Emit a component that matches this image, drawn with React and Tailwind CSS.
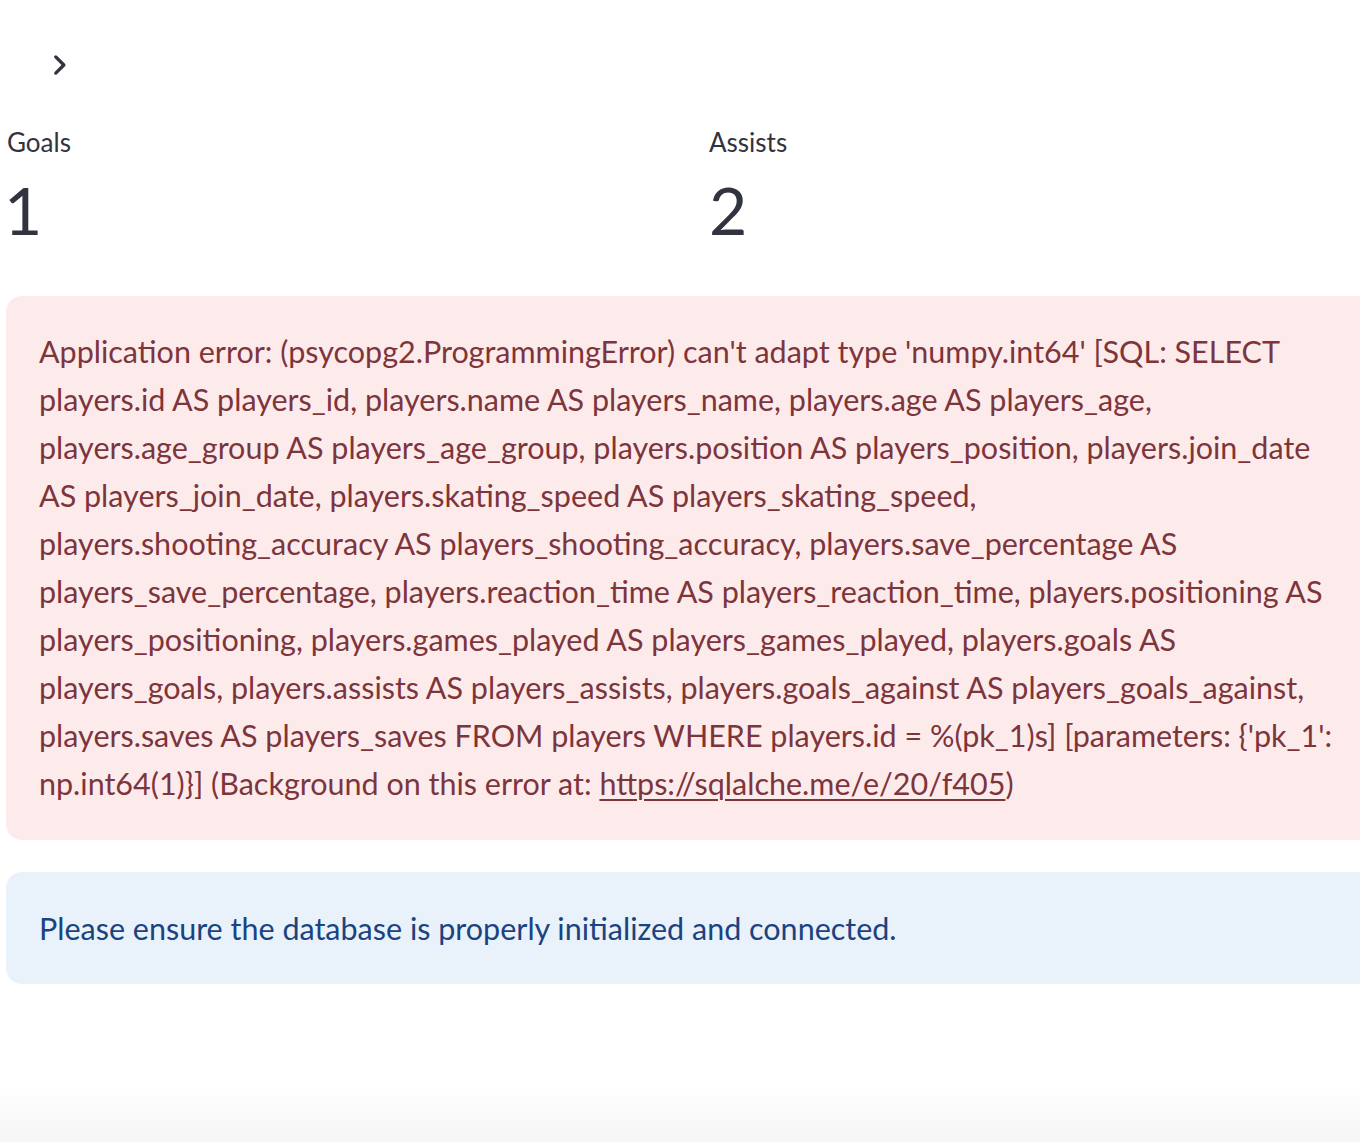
export default function App() {
    const errorLines = [
        "Application error: (psycopg2.ProgrammingError) can't adapt type 'numpy.int64' [SQL: SELECT",
        "players.id AS players_id, players.name AS players_name, players.age AS players_age,",
        "players.age_group AS players_age_group, players.position AS players_position, players.join_date",
        "AS players_join_date, players.skating_speed AS players_skating_speed,",
        "players.shooting_accuracy AS players_shooting_accuracy, players.save_percentage AS",
        "players_save_percentage, players.reaction_time AS players_reaction_time, players.positioning AS",
        "players_positioning, players.games_played AS players_games_played, players.goals AS",
        "players_goals, players.assists AS players_assists, players.goals_against AS players_goals_against,",
        "players.saves AS players_saves FROM players WHERE players.id = %(pk_1)s] [parameters: {'pk_1':",
    ];

    return (
        <div
            className="relative w-[1360px] h-[1142px] overflow-hidden bg-white"
            style={{ fontFamily: 'Lato, "Open Sans", sans-serif' }}
        >
            <div className="pl-[6px] pt-[47px]">
                <div className="pl-[40px] h-[36px] flex items-center text-[#31333f]">
                    <svg width="26" height="26" viewBox="0 0 24 24" fill="none" stroke="currentColor" strokeWidth="3" strokeLinecap="round" strokeLinejoin="round">
                        <path d="M9 4.5l7.5 7.5-7.5 7.5" />
                    </svg>
                </div>

                <div className="mt-[39px] grid grid-cols-[703px_1fr] text-[#31333f]">
                    <div>
                        <div className="text-[26px] leading-[40px] pl-[1px]">Goals</div>
                        <div className="mt-[6px] text-[66px] leading-[84px] -ml-[2px]">1</div>
                    </div>
                    <div>
                        <div className="text-[26px] leading-[40px]">Assists</div>
                        <div className="mt-[6px] text-[66px] leading-[84px]">2</div>
                    </div>
                </div>

                <div className="mt-[44px] w-[1420px] rounded-[16px] bg-[#fdebec] px-[33px] pt-[31px] pb-[33px] text-[#7d353b] text-[30.5px] leading-[48px] whitespace-nowrap">
                    {errorLines.map((l, i) => (
                        <div key={i}>{l}</div>
                    ))}
                    <div>
                        np.int64(1)}] (Background on this error at: <span className="underline underline-offset-[4px] decoration-[1.5px]">https://sqlalche.me/e/20/f405</span>)
                    </div>
                </div>

                <div className="mt-[32px] w-[1420px] rounded-[16px] bg-[#e9f1fb] px-[33px] py-[32px] text-[#1a4380] text-[30.5px] leading-[48px]">
                    Please ensure the database is properly initialized and connected.
                </div>
            </div>

            <div className="absolute left-0 right-0 bottom-0 h-[60px] bg-gradient-to-b from-white to-[#f6f6f6]" />
        </div>
    );
}
